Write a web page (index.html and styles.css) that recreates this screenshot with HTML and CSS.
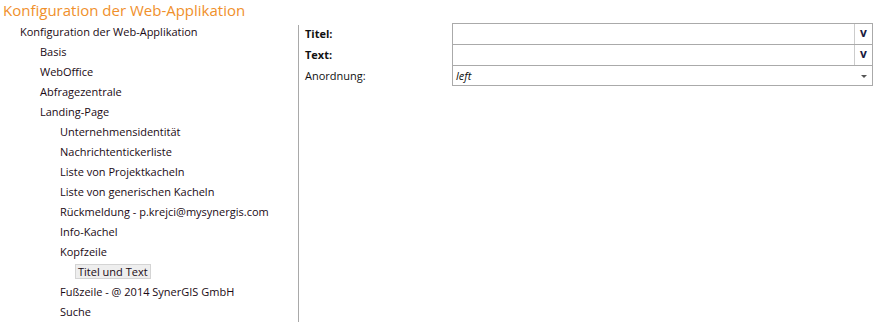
FILE: index.html
```html
<!DOCTYPE html>
<html lang="de">
<head>
  <meta charset="UTF-8">
  <title>Konfiguration der Web-Applikation</title>
  <link rel="stylesheet" href="styles.css">
</head>
<body>
  <h1 class="title">Konfiguration der Web-Applikation</h1>
  <div class="main">
    <ul class="tree">
      <li class="lv0">Konfiguration der Web-Applikation</li>
      <li class="lv1">Basis</li>
      <li class="lv1">WebOffice</li>
      <li class="lv1">Abfragezentrale</li>
      <li class="lv1">Landing-Page</li>
      <li class="lv2">Unternehmensidentität</li>
      <li class="lv2">Nachrichtentickerliste</li>
      <li class="lv2">Liste von Projektkacheln</li>
      <li class="lv2">Liste von generischen Kacheln</li>
      <li class="lv2">Rückmeldung - p.krejci@mysynergis.com</li>
      <li class="lv2">Info-Kachel</li>
      <li class="lv2">Kopfzeile</li>
      <li class="lv3"><span class="sel">Titel und Text</span></li>
      <li class="lv2">Fußzeile - @ 2014 SynerGIS GmbH</li>
      <li class="lv2">Suche</li>
    </ul>
    <div class="divider"></div>
    <div class="form">
      <div class="row">
        <label class="bold">Titel:</label>
        <div class="field"><span class="input"></span><span class="btn">v</span></div>
      </div>
      <div class="row">
        <label class="bold">Text:</label>
        <div class="field"><span class="input"></span><span class="btn">v</span></div>
      </div>
      <div class="row">
        <label>Anordnung:</label>
        <div class="field"><span class="input sel-val">left</span><span class="arrow"></span></div>
      </div>
    </div>
  </div>
</body>
</html>
```

FILE: styles.css
```css
*{margin: 0; padding: 0; box-sizing: border-box;}
body{
  width: 875px;
  height: 322px;
  overflow: hidden;
  font-family: "Open Sans", "Noto Sans", sans-serif;
  font-size: 11px;
  color: #111;
  background: #fff;
}
.title{
  font-weight: normal;
  font-size: 15px;
  color: #f0902b;
  height: 22px;
  line-height: 20px;
  padding-left: 3px;
}
.main{
  display: flex;
}
.tree{
  list-style: none;
  width: 298px;
  flex: none;
}
.tree li{
  height: 20px;
  line-height: 20px;
  white-space: nowrap;
  color: #1a0a14;
}
.tree .lv0{padding-left: 20px;}
.tree .lv1{padding-left: 40px;}
.tree .lv2{padding-left: 60px;}
.tree .lv3{padding-left: 75px;}
.tree .sel{
  display: inline-block;
  height: 15px;
  line-height: 13px;
  padding: 0 2px;
  background: #eeeeee;
  border: 1px solid #d4d4d4;
}
.divider{
  width: 1px;
  flex: none;
  margin-top: 3px;
  height: 300px;
  background: #a9a9a9;
}
.form{
  flex: 1;
  padding-left: 6px;
  padding-top: 1px;
}
.row{
  display: flex;
  height: 21px;
  align-items: stretch;
}
.row label{
  width: 147px;
  line-height: 22px;
  flex: none;
}
.row label.bold{font-weight: bold;}
.field{
  width: 421px;
  display: flex;
  border: 1px solid #aaaaaa;
  border-bottom: none;
  background: #fff;
}
.row:last-child .field{border-bottom: 1px solid #aaaaaa;}
.input{
  flex: 1;
  line-height: 19px;
  padding-left: 3px;
}
.sel-val{font-style: italic;}
.btn{
  width: 18px;
  border-left: 1px solid #cccccc;
  font-weight: bold;
  text-align: center;
  line-height: 18px;
  font-size: 12px;
  color: #1a1a40;
}
.arrow{
  width: 18px;
  position: relative;
}
.arrow::after{
  content: "";
  position: absolute;
  left: 7px;
  top: 9px;
  border-left: 3px solid transparent;
  border-right: 3px solid transparent;
  border-top: 3px solid #555;
}
```
